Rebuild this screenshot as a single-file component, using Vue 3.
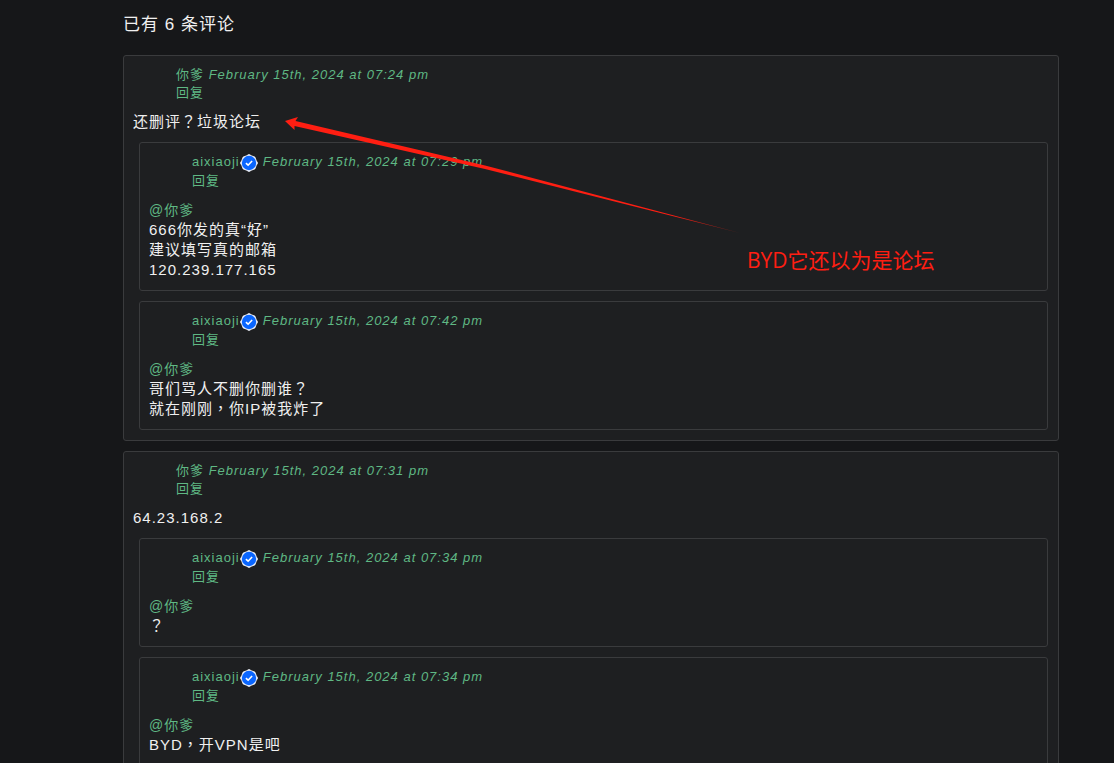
<script setup>
const comments = [
  {
    id: 1,
    author: '你爹',
    date: 'February 15th, 2024 at 07:24 pm',
    lines: ['还删评？垃圾论坛'],
    replies: [
      {
        id: 2,
        author: 'aixiaoji',
        date: 'February 15th, 2024 at 07:29 pm',
        to: '@你爹',
        lines: ['666你发的真“好”', '建议填写真的邮箱', '120.239.177.165'],
      },
      {
        id: 3,
        author: 'aixiaoji',
        date: 'February 15th, 2024 at 07:42 pm',
        to: '@你爹',
        lines: ['哥们骂人不删你删谁？', '就在刚刚，你IP被我炸了'],
      },
    ],
  },
  {
    id: 4,
    author: '你爹',
    date: 'February 15th, 2024 at 07:31 pm',
    lines: ['64.23.168.2'],
    replies: [
      {
        id: 5,
        author: 'aixiaoji',
        date: 'February 15th, 2024 at 07:34 pm',
        to: '@你爹',
        lines: ['？'],
      },
      {
        id: 6,
        author: 'aixiaoji',
        date: 'February 15th, 2024 at 07:34 pm',
        to: '@你爹',
        lines: ['BYD，开VPN是吧'],
      },
    ],
  },
]
</script>

<template>
  <main class="page">
    <h3 class="title">已有 6 条评论</h3>
    <ol class="list">
      <li v-for="c in comments" :key="c.id" class="card">
        <div class="meta">
          <div><span>{{ c.author }}</span>&nbsp;<time>{{ c.date }}</time></div>
          <div><a href="#reply">回复</a></div>
        </div>
        <div class="content">
          <p v-for="line in c.lines" :key="line">{{ line }}</p>
        </div>
        <ol class="list replies">
          <li v-for="r in c.replies" :key="r.id" class="card">
            <div class="meta">
              <div class="byline">
                <a href="#author">{{ r.author }}</a>
                <svg class="badge" viewBox="0 0 18 18" aria-hidden="true">
                  <path
                    d="M9 .4 11.5 1.8 14.9 3.1 16.2 6.5 17.6 9 16.2 11.5 14.9 14.9 11.5 16.2 9 17.6 6.5 16.2 3.1 14.9 1.8 11.5 .4 9 1.8 6.5 3.1 3.1 6.5 1.8Z"
                    fill="#f2f6ff" stroke="#f2f6ff" stroke-width=".8" stroke-linejoin="round"
                  />
                  <circle cx="9" cy="9" r="7.2" fill="#0a66ff" />
                  <path d="M5.9 9.2 8.1 11.2 12.1 7" fill="none" stroke="#fff" stroke-width="1.6" />
                </svg>
                <time>{{ r.date }}</time>
              </div>
              <div><a href="#reply">回复</a></div>
            </div>
            <div class="content">
              <a class="mention" href="#parent">{{ r.to }}</a>
              <p v-for="line in r.lines" :key="line">{{ line }}</p>
            </div>
          </li>
        </ol>
      </li>
    </ol>
    <svg class="arrow" width="460" height="124" viewBox="0 0 460 124" aria-hidden="true">
      <defs>
        <linearGradient id="fade" x1="0" x2="1">
          <stop offset="0.85" stop-color="#ff1e12" />
          <stop offset="1" stop-color="#ff1e12" stop-opacity="0.5" />
        </linearGradient>
      </defs>
      <path d="M0 9 13 5 10.5 9 200 53.5 455 121 200 57 9.5 14 9.5 18Z" fill="url(#fade)" />
    </svg>
    <div class="note">BYD它还以为是论坛</div>
  </main>
</template>

<style>
body {
  margin: 0;
  background: #161719;
}
</style>

<style scoped>
.page {
  position: relative;
  box-sizing: border-box;
  height: 100vh;
  overflow-y: auto;
  scrollbar-width: none;
  padding: 13px 55px 12px 123px;
  background: #161719;
  color: #f0f0f0;
  font-family: "Liberation Sans", "Noto Sans CJK TC", sans-serif;
  font-size: 15px;
  line-height: 20px;
  letter-spacing: 1px;
}
.title {
  margin: 0 0 18px;
  font-size: 17px;
  font-weight: 400;
  line-height: 24px;
}
.list {
  display: flex;
  flex-direction: column;
  gap: 10px;
  margin: 0;
  padding: 0;
  list-style: none;
}
.card {
  padding: 10px 10px 10px 9px;
  border: 1px solid #3a3b3d;
  border-radius: 3px;
  background: #1e1f21;
}
.replies {
  margin: 10px 0 0 6px;
}
.meta {
  margin: 0 0 10px 43px;
  color: #5fb884;
  font-size: 13px;
  line-height: 18px;
}
.byline {
  display: flex;
}
.badge {
  width: 18px;
  height: 18px;
  margin: 1px 5px 0 0;
}
time {
  font-style: italic;
}
a {
  color: #5fb884;
  text-decoration: none;
}
.mention {
  display: block;
  font-size: 14px;
}
p {
  margin: 0;
}
.arrow {
  position: absolute;
  left: 285px;
  top: 112px;
  pointer-events: none;
}
.note {
  position: absolute;
  left: 747px;
  top: 246px;
  color: #ff1e12;
  font-family: "Open Sans", "Noto Sans CJK SC", sans-serif;
  font-size: 21px;
  line-height: 28px;
  letter-spacing: 0;
  white-space: nowrap;
}
</style>
